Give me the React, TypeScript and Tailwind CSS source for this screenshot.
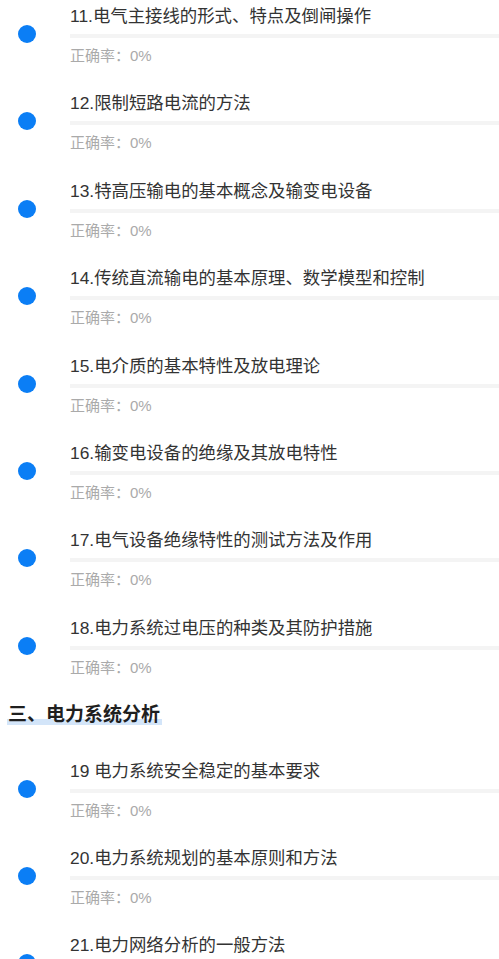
import React from "react";

const FONT = { fontFamily: '"Liberation Sans", "Noto Sans CJK SC", sans-serif' };

const groupA = [
  "11.电气主接线的形式、特点及倒闸操作",
  "12.限制短路电流的方法",
  "13.特高压输电的基本概念及输变电设备",
  "14.传统直流输电的基本原理、数学模型和控制",
  "15.电介质的基本特性及放电理论",
  "16.输变电设备的绝缘及其放电特性",
  "17.电气设备绝缘特性的测试方法及作用",
  "18.电力系统过电压的种类及其防护措施",
];

const groupB = [
  "19 电力系统安全稳定的基本要求",
  "20.电力系统规划的基本原则和方法",
  "21.电力网络分析的一般方法",
];

function Item({ title }: { title: string }) {
  return (
    <div className="flex h-[87.4px]">
      <div className="w-[70px] shrink-0">
        <div className="ml-[18px] mt-[25px] h-[18px] w-[18px] rounded-full bg-[#0b7ef5]" />
      </div>
      <div className="flex min-w-0 flex-1 flex-col">
        <div className="mt-[4px] h-[24px] whitespace-nowrap text-[17.4px] leading-[24px] text-[#333333]">
          {title}
        </div>
        <div className="mt-[6px] h-[4px] w-full bg-[#f4f4f4]" />
        <div className="mt-[7px] h-[22px] text-[15px] leading-[22px] text-[#aaaaaa]">
          正确率：0%
        </div>
      </div>
    </div>
  );
}

export default function App() {
  return (
    <div className="w-[499px] overflow-hidden bg-white" style={FONT}>
      {groupA.map((t) => (
        <Item key={t} title={t} />
      ))}
      <div className="h-[55.5px] pl-[8px]">
        <div className="relative mt-[4px] inline-block h-[24px]">
          <span className="absolute bottom-[2.5px] left-[-1px] right-[-2px] h-[6px] bg-[#d3e5f9]" />
          <span className="relative z-10 text-[19px] font-bold leading-[24px] text-[#1f1f1f]">
            三、电力系统分析
          </span>
        </div>
      </div>
      {groupB.map((t) => (
        <Item key={t} title={t} />
      ))}
    </div>
  );
}
